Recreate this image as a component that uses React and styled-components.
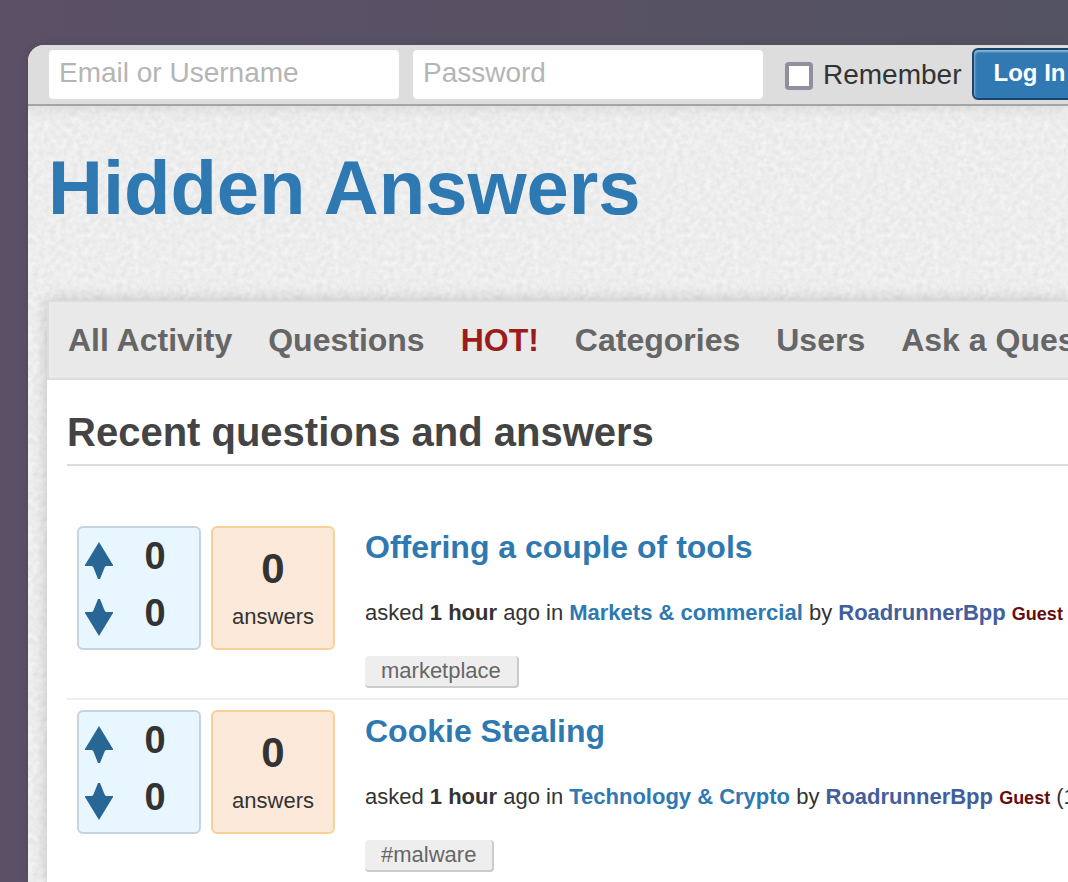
import React from "react"
import styled, { createGlobalStyle } from "styled-components"

const noise = encodeURIComponent(
  `<svg xmlns="http://www.w3.org/2000/svg" width="200" height="200">
    <filter id="n" x="0" y="0" width="100%" height="100%" color-interpolation-filters="sRGB">
      <feTurbulence type="fractalNoise" baseFrequency="0.18" numOctaves="3" stitchTiles="stitch"/>
      <feColorMatrix values="0.09 0 0 0 0.885  0.09 0 0 0 0.885  0.09 0 0 0 0.885  0 0 0 0 1"/>
    </filter>
    <rect width="200" height="200" filter="url(#n)"/>
  </svg>`
)

const GlobalStyle = createGlobalStyle`
  * {
    box-sizing: border-box;
  }

  body {
    margin: 0;
    min-height: 100vh;
    overflow: hidden;
    background: linear-gradient(to right, #5b5066, #545362);
    color: #333;
    font-family: "Liberation Sans", Arial, sans-serif;
    font-size: 22px;
  }

  a {
    text-decoration: none;
  }
`

const Page = styled.div`
  margin: 45px 0 0 28px;
  min-height: calc(100vh - 45px);
  overflow: hidden;
  border-top-left-radius: 16px;
  background: #eee url("data:image/svg+xml,${noise}");
  box-shadow: 0 0 8px rgba(0, 0, 0, 0.1);
`

const LoginBar = styled.form`
  display: flex;
  align-items: center;
  height: 61px;
  padding-left: 21px;
  background: #ddd;
  border-bottom: 2px solid #a5a5a5;
  box-shadow: 0 2px 14px rgba(0, 0, 0, 0.1);

  > * {
    flex-shrink: 0;
  }
`

const Field = styled.input`
  width: 350px;
  height: 49px;
  margin-right: 14px;
  padding: 0 10px 4px;
  border: 0;
  border-radius: 4px;
  background: #fff;
  font-family: inherit;
  font-size: 28px;

  &::placeholder {
    color: #b5b5b5;
    opacity: 1;
  }
`

const Remember = styled.label`
  display: flex;
  align-items: center;
  gap: 10px;
  margin: 0 11px 0 8px;
  font-size: 28px;

  input {
    appearance: none;
    width: 28px;
    height: 28px;
    margin: 2px 0 0;
    border: 4px solid #8f8f9d;
    border-radius: 4px;
    background: #fff;
  }
`

const LoginButton = styled.button`
  height: 52px;
  margin-bottom: 2px;
  padding: 0 19px 2px;
  border: 2px solid #1a4568;
  border-radius: 6px;
  background: #3079b3;
  box-shadow: inset 1px 2px 2px rgba(255, 255, 255, 0.45);
  color: #fff;
  font-family: inherit;
  font-size: 24px;
  font-weight: 700;
`

const Logo = styled.h1`
  margin: 0;
  padding: 42px 0 72px 20px;
  font-size: 76px;
  line-height: 80px;

  a {
    color: #2f79b2;
  }
`

const Content = styled.div`
  margin-left: 19px;
  background: #fff;
  box-shadow: 0 0 14px rgba(0, 0, 0, 0.2);
`

const Nav = styled.nav`
  display: flex;
  align-items: center;
  gap: 36px;
  height: 80px;
  padding-left: 19px;
  overflow: hidden;
  border: 2px solid #ddd;
  border-right: 0;
  background: #e9e9e9;
`

const NavLink = styled.a`
  flex-shrink: 0;
  color: ${({ $hot }) => ($hot ? "#9b1c1c" : "#666")};
  font-size: 32px;
  font-weight: 700;
`

const Main = styled.main`
  padding: 30px 0 0 20px;
`

const Heading = styled.h2`
  margin: 0 0 50px;
  padding-bottom: 10px;
  border-bottom: 2px solid #ddd;
  color: #444;
  font-size: 40px;
  line-height: 44px;
`

const Row = styled.article`
  display: flex;
  gap: 10px;
  padding: 10px 0 10px 10px;

  & + & {
    border-top: 2px solid #eee;
  }
`

const Box = styled.div`
  flex: none;
  width: 124px;
  height: 124px;
  border: 2px solid #c5d3df;
  border-radius: 6px;
`

const Votes = styled(Box)`
  display: flex;
  background: #e8f6ff;
`

const Arrows = styled.div`
  display: flex;
  flex-direction: column;
  gap: 20px;
  padding: 14px 6px 0;
`

const VoteButton = styled.button`
  display: block;
  width: 28px;
  height: 37px;
  padding: 0;
  border: 0;
  background: none;

  svg {
    display: block;
    transform: ${({ $down }) => ($down ? "rotate(180deg)" : "none")};
  }
`

const Counts = styled.div`
  width: 60px;
  margin-left: 6px;
  font-size: 38px;
  font-weight: 700;
  line-height: 57px;
  text-align: center;
`

const Answers = styled(Box)`
  padding-top: 18px;
  border-color: #f9d196;
  background: #fce9d9;
  line-height: 26px;
  text-align: center;

  strong {
    display: block;
    margin-bottom: 12px;
    font-size: 42px;
    line-height: 46px;
  }
`

const Details = styled.div`
  flex: 1;
  min-width: 0;
  padding: 1px 0 0 20px;
  white-space: nowrap;
`

const Title = styled.h3`
  margin: 0 0 33px;
  font-size: 32px;
  line-height: 40px;

  a {
    color: #2f79b2;
  }
`

const Meta = styled.p`
  margin: 0 0 30px;
  line-height: 26px;

  a {
    color: #2f79b2;
    font-weight: 700;
  }
`

const User = styled.a`
  && {
    color: #425e9b;
  }
`

const Guest = styled.span`
  color: #660c0c;
  font-size: 18px;
  font-weight: 700;
  line-height: 1;
`

const Tag = styled.a`
  display: block;
  width: fit-content;
  height: 32px;
  padding: 0 16px;
  border-right: 2px solid #ccc;
  border-bottom: 2px solid #ccc;
  border-radius: 4px;
  background: #eee;
  color: #666;
  line-height: 30px;
`

const links = ["All Activity", "Questions", "HOT!", "Categories", "Users", "Ask a Question"]

const questions = [
  {
    title: "Offering a couple of tools",
    category: "Markets & commercial",
    points: "(120 points)",
    tag: "marketplace",
  },
  {
    title: "Cookie Stealing",
    category: "Technology & Crypto",
    points: "(120 points)",
    tag: "#malware",
  },
]

const Arrow = () => (
  <svg width="28" height="37" viewBox="0 0 28 37">
    <path
      d="M14 0 L28 23 L28 24 L21 24 Q20 24 19 27 L15 37 L13 37 L9 27 Q8 24 7 24 L0 24 L0 23 Z"
      fill="#286696"
    />
  </svg>
)

const Question = ({ title, category, points, tag }) => (
  <Row>
    <Votes>
      <Arrows>
        <VoteButton type="button" aria-label="Vote up">
          <Arrow />
        </VoteButton>
        <VoteButton type="button" aria-label="Vote down" $down>
          <Arrow />
        </VoteButton>
      </Arrows>
      <Counts>
        <div>0</div>
        <div>0</div>
      </Counts>
    </Votes>
    <Answers>
      <strong>0</strong>
      answers
    </Answers>
    <Details>
      <Title>
        <a href="#question">{title}</a>
      </Title>
      <Meta>
        asked <b>1 hour</b> ago in <a href="#category">{category}</a> by{" "}
        <User href="#user">RoadrunnerBpp</User> <Guest>Guest</Guest> {points}
      </Meta>
      <Tag href="#tag">{tag}</Tag>
    </Details>
  </Row>
)

const App = () => {
  return (
    <>
      <GlobalStyle />
      <Page>
        <LoginBar>
          <Field type="text" placeholder="Email or Username" aria-label="Email or Username" />
          <Field type="password" placeholder="Password" aria-label="Password" />
          <Remember>
            <input type="checkbox" />
            Remember
          </Remember>
          <LoginButton type="button">Log In</LoginButton>
        </LoginBar>
        <Logo>
          <a href="#home">Hidden Answers</a>
        </Logo>
        <Content>
          <Nav>
            {links.map((link) => (
              <NavLink key={link} href="#nav" $hot={link === "HOT!"}>
                {link}
              </NavLink>
            ))}
          </Nav>
          <Main>
            <Heading>Recent questions and answers</Heading>
            {questions.map((question) => (
              <Question key={question.title} {...question} />
            ))}
          </Main>
        </Content>
      </Page>
    </>
  )
}

export default App
